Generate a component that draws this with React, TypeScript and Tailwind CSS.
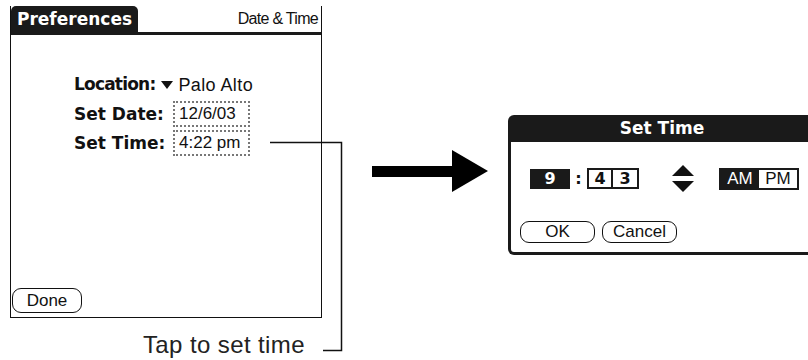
const narrow = "font-['Liberation_Sans_Narrow','Liberation_Sans',Arial,sans-serif]";
const bold = "font-['DejaVu_Sans','Verdana',sans-serif] font-bold";

function Field({ children }: { children: React.ReactNode }) {
  return (
    <div
      className={`${narrow} w-[77px] h-[26px] border-2 border-dotted border-[#777] px-[4px] text-[17px] leading-[22px] text-[#111]`}
    >
      {children}
    </div>
  );
}

function PalmButton({ label, w }: { label: string; w: string }) {
  return (
    <div
      className={`${narrow} ${w} flex items-center justify-center border-[1.5px] border-[#111] rounded-[9px] text-[17px] text-[#111]`}
    >
      {label}
    </div>
  );
}

export default function App() {
  return (
    <div className="relative w-[808px] h-[360px] overflow-hidden bg-white flex items-start">
      {/* left: preferences screen + caption */}
      <div className="ml-[10px] w-[312px] shrink-0 flex flex-col">
        <div className="w-[312px] h-[312px] mt-[6px] border-x border-b border-[#111] flex flex-col">
          <div className="flex items-start justify-between h-[29px] border-b-[3px] border-[#1a1a1a]">
            <div
              className={`${bold} h-[26px] px-[6px] bg-[#1a1a1a] rounded-t-[5px] text-white text-[17px] leading-[26px]`}
            >
              Preferences
            </div>
            <div className={`${narrow} pr-[3px] text-[16px] tracking-[-0.7px] leading-[26px] text-[#111]`}>
              Date &amp; Time
            </div>
          </div>

          <div className="mt-[37px] ml-[63px] grid grid-cols-[99px_auto] gap-y-[3px] items-center">
            <div className="col-span-2 flex items-center h-[26px]">
              <span className={`${bold} text-[17px] tracking-[-0.8px] text-[#111]`}>Location:</span>
              <svg className="ml-[6px]" width="12" height="8" viewBox="0 0 12 8">
                <path d="M0 0 H12 L6 8 Z" fill="#111" />
              </svg>
              <span className={`${narrow} ml-[5px] text-[18px] tracking-[0.4px] text-[#111]`}>Palo Alto</span>
            </div>
            <div className={`${bold} text-[17px] leading-[26px] text-[#111]`}>Set Date:</div>
            <Field>12/6/03</Field>
            <div className={`${bold} text-[17px] leading-[26px] text-[#111]`}>Set Time:</div>
            <Field>4:22 pm</Field>
          </div>

          <div className="mt-auto mb-[4px] ml-[1px] h-[25px] flex">
            <PalmButton label="Done" w="w-[70px]" />
          </div>
        </div>
        <div className="mt-[14px] pr-[17px] text-right font-['Liberation_Sans',Arial,sans-serif] text-[24px] tracking-[0.4px] leading-[26px] text-[#222]">
          Tap to set time
        </div>
      </div>

      {/* arrow */}
      <svg className="ml-[50px] mt-[150px] shrink-0" width="116" height="42" viewBox="0 0 116 42">
        <rect x="0" y="16" width="81" height="11" fill="#000" />
        <path d="M80 0 L116 21 L80 42 Z" fill="#000" />
      </svg>

      {/* set time dialog */}
      <div className="ml-[20px] mt-[115px] w-[308px] shrink-0 flex flex-col">
        <div
          className={`${bold} h-[27px] bg-[#1a1a1a] rounded-t-[6px] text-white text-[17px] leading-[27px] text-center`}
        >
          Set Time
        </div>
        <div className="border-x-[3px] border-b-[3px] border-[#1a1a1a] rounded-b-[6px] pt-[23px] pb-[9px]">
          <div className="flex items-center h-[27px]">
            <div
              className={`${bold} ml-[19px] w-[40px] h-[20px] bg-[#1a1a1a] text-white text-[16px] leading-[20px] text-center`}
            >
              9
            </div>
            <div className={`${bold} w-[17px] text-center text-[16px] text-[#111]`}>:</div>
            <div className={`${bold} flex h-[21px] border-2 border-[#1a1a1a] text-[16px] leading-[17px] text-[#111]`}>
              <div className="w-[24px] text-center border-r-2 border-[#1a1a1a]">4</div>
              <div className="w-[24px] text-center">3</div>
            </div>
            <svg className="ml-[33px]" width="22" height="27" viewBox="0 0 22 27">
              <path d="M0 11 L11 0 L22 11 Z" fill="#111" />
              <path d="M0 16 L22 16 L11 27 Z" fill="#111" />
            </svg>
            <div className={`${narrow} ml-[25px] flex h-[22px] border-2 border-[#1a1a1a] text-[17px] leading-[18px]`}>
              <div className="w-[38px] bg-[#1a1a1a] text-white text-center">AM</div>
              <div className="w-[38px] text-[#111] text-center">PM</div>
            </div>
          </div>
          <div className="mt-[29px] ml-[9px] h-[22px] flex gap-[7px]">
            <PalmButton label="OK" w="w-[75px]" />
            <PalmButton label="Cancel" w="w-[75px]" />
          </div>
        </div>
      </div>

      {/* callout bracket */}
      <svg className="absolute left-[260px] top-[135px]" width="90" height="225" viewBox="260 135 90 225">
        <path d="M270 142.5 H341.5 V350.5 H323" fill="none" stroke="#111" strokeWidth="1.5" />
      </svg>
    </div>
  );
}
